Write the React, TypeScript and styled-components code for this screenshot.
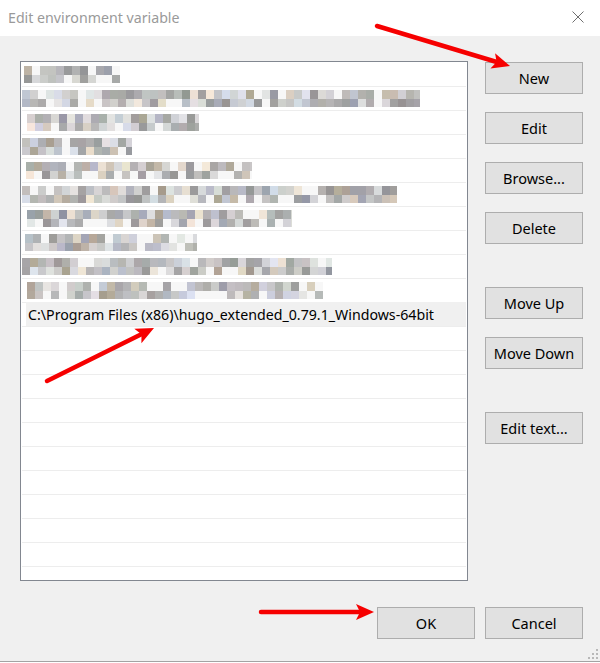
import React from "react";
import styled, { createGlobalStyle } from "styled-components";

const GlobalStyle = createGlobalStyle`
  html, body { margin: 0; padding: 0; background: #ffffff; }
  body { font-family: "Noto Sans", "Open Sans", "Liberation Sans", sans-serif; }
  * { box-sizing: border-box; }
`;

const Window = styled.div`
  position: relative;
  width: 600px;
  height: 662px;
  background: #f0f0f0;
  border-bottom: 1px solid #a3a3a3;
  display: flex;
  flex-direction: column;
`;

const TitleBar = styled.div`
  height: 36px;
  background: #ffffff;
  display: flex;
  align-items: center;
  justify-content: space-between;
  padding: 0 16px 0 8px;
`;

const Title = styled.div`
  font-size: 14.2px;
  color: #9a9a9a;
  line-height: 1;
  margin-top: 1px;
`;

const CloseIcon = styled.svg`
  width: 12px;
  height: 12px;
  display: block;
  margin-top: -2px;
`;

const Body = styled.div`
  display: flex;
  align-items: flex-start;
  gap: 17px;
  padding: 25px 17px 0 20px;
`;

const ListBox = styled.div`
  width: 448px;
  height: 520px;
  border: 1px solid #828790;
  background: #ffffff;
  padding: 1px;
  overflow: hidden;
`;

const Row = styled.div`
  height: 24px;
  border-bottom: 1px solid #ededed;
  display: flex;
  align-items: flex-start;
`;

const Entry = styled.div<{ $selected?: boolean }>`
  flex: 1;
  height: 24px;
  margin: -1px 0 0 4px;
  padding-left: 2px;
  display: flex;
  align-items: center;
  background: ${(p) => (p.$selected ? "#f0f0f0" : "transparent")};
  font-size: 14.2px;
  color: #000000;
  white-space: nowrap;
`;

const MosaicSvg = styled.svg<{ $offset: number }>`
  display: block;
  margin: 3px 0 0 ${(p) => p.$offset}px;
`;

const ButtonColumn = styled.div`
  display: flex;
  flex-direction: column;
  gap: 43px;
  padding-top: 1px;
`;

const ButtonGroup = styled.div`
  display: flex;
  flex-direction: column;
  gap: 18px;
`;

const Button = styled.button`
  width: 98px;
  height: 32px;
  padding: 0;
  margin: 0;
  background: #e1e1e1;
  border: 1px solid #adadad;
  border-radius: 0;
  font-family: inherit;
  font-size: 14.5px;
  color: #000000;
  display: flex;
  align-items: center;
  justify-content: center;
`;

const Footer = styled.div`
  display: flex;
  justify-content: flex-end;
  gap: 10px;
  padding: 26px 17px 0 0;
`;

const Overlay = styled.svg`
  position: absolute;
  left: 0;
  top: 0;
  width: 600px;
  height: 663px;
  pointer-events: none;
`;

const Grip = styled.svg`
  position: absolute;
  right: 2px;
  bottom: 2px;
  width: 10px;
  height: 10px;
`;

function prng(seed: number) {
  let a = seed >>> 0;
  return () => {
    a = (a + 0x6d2b79f5) >>> 0;
    let t = a;
    t = Math.imul(t ^ (t >>> 15), t | 1);
    t ^= t + Math.imul(t ^ (t >>> 7), t | 61);
    return ((t ^ (t >>> 14)) >>> 0) / 4294967296;
  };
}

const clamp = (v: number) => Math.max(0, Math.min(255, Math.round(v)));

function Mosaic({ offset, width, seed }: { offset: number; width: number; seed: number }) {
  const rnd = prng(seed);
  const cols = Math.ceil(width / 8);
  const cells: React.ReactNode[] = [];
  for (let r = 0; r < 2; r++) {
    for (let c = 0; c < cols; c++) {
      const x = c * 8;
      const y = r === 0 ? 0 : 9;
      const h = r === 0 ? 9 : 8;
      const w = Math.min(8, width - x);
      const roll = rnd();
      let col: string;
      if (roll < 0.16) {
        col = "#f7f7f7";
      } else {
        const v = 150 + rnd() * 80;
        const kind = rnd();
        let tr = (rnd() - 0.5) * 8;
        let tg = (rnd() - 0.5) * 8;
        let tb = (rnd() - 0.5) * 8;
        if (kind < 0.15) {
          tr += 14; tg += 4; tb -= 10;
        } else if (kind < 0.3) {
          tr -= 6; tg -= 2; tb += 10;
        }
        col = `rgb(${clamp(v + tr)},${clamp(v + tg)},${clamp(v + tb)})`;
      }
      cells.push(<rect key={`${r}-${c}`} x={x} y={y} width={w} height={h} fill={col} />);
    }
  }
  return (
    <MosaicSvg $offset={offset} width={width} height={17} viewBox={`0 0 ${width} 17`}>
      {cells}
    </MosaicSvg>
  );
}

function Arrow({ x1, y1, x2, y2 }: { x1: number; y1: number; x2: number; y2: number }) {
  const dx = x2 - x1;
  const dy = y2 - y1;
  const len = Math.hypot(dx, dy);
  const ux = dx / len;
  const uy = dy / len;
  const L = 18;
  const W = 8;
  const bx = x2 - ux * L;
  const by = y2 - uy * L;
  const px = -uy * W;
  const py = ux * W;
  const pts = `${x2},${y2} ${bx + px},${by + py} ${bx + ux * 4},${by + uy * 4} ${bx - px},${by - py}`;
  return (
    <g>
      <line x1={x1} y1={y1} x2={bx + ux * 5} y2={by + uy * 5} stroke="#f60000" strokeWidth={4.5} strokeLinecap="round" />
      <polygon points={pts} fill="#f60000" />
    </g>
  );
}

const rows = [
  { offset: 2, width: 96 },
  { offset: 0, width: 398 },
  { offset: 5, width: 172 },
  { offset: 0, width: 110 },
  { offset: 4, width: 226 },
  { offset: 0, width: 375 },
  { offset: 5, width: 265 },
  { offset: 3, width: 172 },
  { offset: 0, width: 310 },
  { offset: 5, width: 296 },
];

const SELECTED = "C:\\Program Files (x86)\\hugo_extended_0.79.1_Windows-64bit";

export default function App() {
  const emptyRows = Array.from({ length: 11 });
  return (
    <>
      <GlobalStyle />
      <Window>
        <TitleBar>
          <Title>Edit environment variable</Title>
          <CloseIcon viewBox="0 0 12 12">
            <path d="M0.5 0.5 L11.5 11.5 M11.5 0.5 L0.5 11.5" stroke="#6f6f6f" strokeWidth={1} fill="none" />
          </CloseIcon>
        </TitleBar>
        <Body>
          <ListBox>
            {rows.map((r, i) => (
              <Row key={i}>
                <Mosaic offset={r.offset} width={r.width} seed={i * 977 + 13} />
              </Row>
            ))}
            <Row>
              <Entry $selected>{SELECTED}</Entry>
            </Row>
            {emptyRows.map((_, i) => (
              <Row key={`e${i}`} />
            ))}
          </ListBox>
          <ButtonColumn>
            <ButtonGroup>
              <Button>New</Button>
              <Button>Edit</Button>
              <Button>Browse...</Button>
              <Button>Delete</Button>
            </ButtonGroup>
            <ButtonGroup>
              <Button>Move Up</Button>
              <Button>Move Down</Button>
            </ButtonGroup>
            <ButtonGroup>
              <Button>Edit text...</Button>
            </ButtonGroup>
          </ButtonColumn>
        </Body>
        <Footer>
          <Button>OK</Button>
          <Button>Cancel</Button>
        </Footer>
        <Grip viewBox="0 0 10 10">
          <rect x={8} y={0} width={2} height={2} fill="#b8b8b8" />
          <rect x={4} y={4} width={2} height={2} fill="#b8b8b8" />
          <rect x={8} y={4} width={2} height={2} fill="#b8b8b8" />
          <rect x={0} y={8} width={2} height={2} fill="#b8b8b8" />
          <rect x={4} y={8} width={2} height={2} fill="#b8b8b8" />
          <rect x={8} y={8} width={2} height={2} fill="#b8b8b8" />
        </Grip>
        <Overlay viewBox="0 0 600 663">
          <Arrow x1={377} y1={26} x2={510} y2={66} />
          <Arrow x1={47} y1={381} x2={154} y2={328} />
          <Arrow x1={261} y1={612} x2={374} y2={612} />
        </Overlay>
      </Window>
    </>
  );
}
